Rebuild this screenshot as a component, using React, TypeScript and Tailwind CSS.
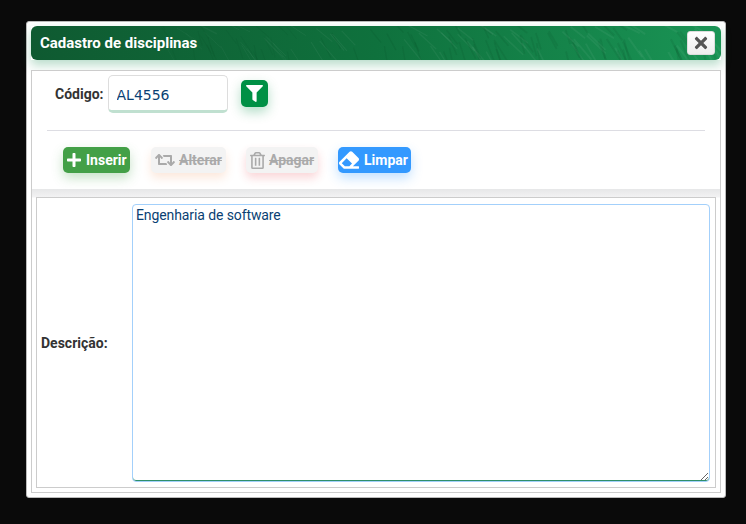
import { FaEraser, FaFilter, FaPlus, FaRegTrashAlt, FaRetweet, FaTimes } from 'react-icons/fa';

const font = { fontFamily: 'Roboto, sans-serif' };

// fine blade-like strokes for the header's leaf texture, no visible rhythm
const strokes = Array.from({ length: 150 }, (_, i) => {
  const r1 = Math.abs(Math.sin(i * 12.9898) * 43758.5453) % 1;
  const r2 = Math.abs(Math.sin(i * 78.233) * 12543.123) % 1;
  const r3 = Math.abs(Math.sin(i * 37.719) * 9631.77) % 1;
  const x = 130 + r1 * 560;
  const y = -4 + r2 * 30;
  const lean = 4 + r3 * 16;
  const len = 8 + r2 * 22;
  return { d: `M${x.toFixed(1)} ${y.toFixed(1)} l${lean.toFixed(1)} ${len.toFixed(1)}`, light: r3 > 0.6, w: 0.6 + r1 * 1.6 };
});

const Header = () => (
  <div className="relative flex h-[34px] items-center justify-between overflow-hidden rounded-md bg-gradient-to-r from-[#0f5a31] via-[#0f713d] to-[#1a9455] pl-[9px] pr-[6px]">
    <svg className="absolute inset-0 h-full w-full" viewBox="0 0 690 34" aria-hidden="true">
      {strokes.map((s, i) => (
        <path key={i} d={s.d} stroke={s.light ? '#ffffff' : '#063d20'} strokeOpacity={s.light ? 0.05 : 0.1} strokeWidth={s.w} fill="none" />
      ))}
    </svg>
    <span className="relative text-[15px] font-bold text-white">Cadastro de disciplinas</span>
    <button className="relative flex h-[24px] w-[28px] items-center justify-center rounded-[3px] border border-[#ddd] bg-gradient-to-b from-white to-[#eeeeee] text-[#555]">
      <FaTimes size={18} />
    </button>
  </div>
);

const Toolbar = () => (
  <div className="mt-[16px] flex h-[26px] gap-[20px] pl-[16px] text-sm font-bold">
    <button className="mr-[1px] flex w-[67px] items-center gap-[4px] rounded-[5px] bg-[#43a047] pl-[3px] text-white shadow-[0_5px_12px_rgba(67,160,71,0.3)]">
      <FaPlus size={16} /> Inserir
    </button>
    <div className="flex w-[75px] items-center gap-[4px] rounded-[5px] bg-[#f3f3f3] pl-[4px] text-[#aaa] line-through shadow-[0_5px_10px_rgba(240,130,60,0.18)]">
      <FaRetweet size={20} /> Alterar
    </div>
    <div className="flex w-[72px] items-center gap-[3px] rounded-[5px] bg-[#f3f3f3] pl-[3px] text-[#aaa] line-through shadow-[0_5px_10px_rgba(230,50,60,0.2)]">
      <FaRegTrashAlt size={17} /> Apagar
    </div>
    <button className="flex w-[73px] items-center gap-[5px] rounded-[5px] bg-[#3399ff] pl-[1px] text-white shadow-[0_5px_12px_rgba(51,153,255,0.3)]">
      <FaEraser size={20} /> Limpar
    </button>
  </div>
);

export default function App() {
  return (
    <div className="h-[524px] w-[746px] overflow-hidden bg-[#0a0a0a] pl-[26px] pt-[21px]" style={font}>
      <div className="flex h-[477px] w-[700px] flex-col rounded-[3px] border border-[#bbb] bg-white p-[4px]">
        <div className="shadow-[0_5px_10px_rgba(20,140,80,0.3)]">
          <Header />
        </div>
        <div className="relative mt-[10px] flex min-h-0 flex-1 flex-col border border-[#ccc] bg-white">
          <div className="h-[118px] px-[15px] pt-[4px]">
            <div className="flex items-center">
              <label className="ml-[8px] text-sm font-bold text-[#333]">Código:</label>
              <input
                readOnly
                value="AL4556"
                className="ml-[4px] h-[38px] w-[120px] rounded-[5px] border border-[#ddd] border-b-[3px] border-b-[#c0e0d0] px-[8px] pt-[3px] text-sm text-[#0a3f73] outline-none"
                style={{ fontFamily: '"DejaVu Sans", sans-serif' }}
              />
              <button className="mb-[2px] ml-[13px] flex h-[27px] w-[27px] items-center justify-center rounded-[5px] bg-[#009045] text-white shadow-[0_5px_12px_rgba(0,144,69,0.3)]">
                <FaFilter size={17} />
              </button>
            </div>
            <hr className="mt-[17px] border-[#dddde3]" />
            <Toolbar />
          </div>
          <div className="flex min-h-0 flex-1 flex-col bg-[linear-gradient(#e6e7e8,#f2f2f3_8px,#ffffff_9px)] px-[4px] pt-[8px]">
            <div className="mb-[4px] flex flex-1 items-center border border-[#ccc] bg-white pb-[5px] pl-[4px] pr-[5px] pt-[6px]">
              <label className="mb-[1px] w-[91px] shrink-0 text-sm font-bold text-[#333]">Descrição:</label>
              <textarea
                readOnly
                value="Engenharia de software"
                className="h-full flex-1 resize-y rounded-[4px] border border-[#a3d0fb] px-[3px] py-0 text-sm tracking-[-0.1px] text-[#0a3f73] shadow-[inset_0_-1px_0_#2f8f6a] outline-none"
                style={font}
              />
            </div>
          </div>
        </div>
      </div>
    </div>
  );
}
